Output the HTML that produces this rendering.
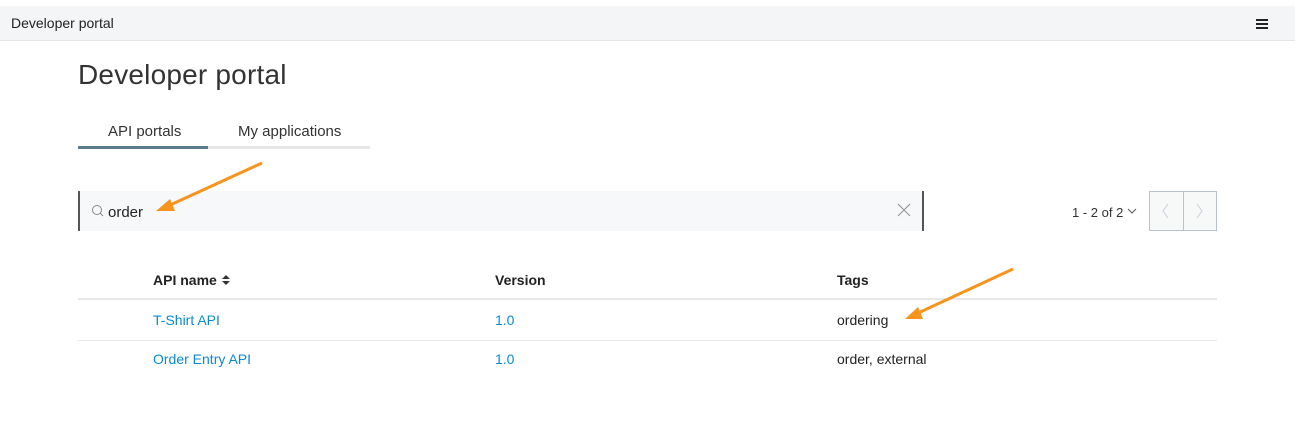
<!DOCTYPE html>
<html><head><style>
body{margin:0;width:1295px;height:443px;background:#fff;font-family:"Liberation Sans",sans-serif;color:#222;position:relative;overflow:hidden}
.a{position:absolute}
</style></head><body>
<div class="a" style="left:0;top:6px;width:1295px;height:34px;background:#f4f5f6;border-bottom:1px solid #e2e4e6"></div>
<div class="a" style="left:11px;top:15px;font-size:14px;color:#222">Developer portal</div>
<div class="a" style="left:1256px;top:19px;width:12px;height:2px;background:#222;box-shadow:0 4px 0 #222,0 8px 0 #222"></div>
<div class="a" style="left:78px;top:59px;font-size:28px;font-weight:300;color:#333;letter-spacing:0.2px">Developer portal</div>
<div class="a" style="left:108px;top:123px;font-size:15px;color:#333">API portals</div>
<div class="a" style="left:238px;top:123px;font-size:15px;color:#333">My applications</div>
<div class="a" style="left:78px;top:146px;width:292px;height:3px;background:#e6e7e8"></div>
<div class="a" style="left:78px;top:146px;width:130px;height:3px;background:#5b7d93"></div>
<div class="a" style="left:78px;top:191px;width:846px;height:40px;background:#f7f8f9;border-left:2px solid #555;border-right:2px solid #555;box-sizing:border-box"></div>
<svg class="a" style="left:91px;top:204px" width="14" height="14"><circle cx="6" cy="6" r="4.5" fill="none" stroke="#888" stroke-width="1"/><line x1="9" y1="9" x2="12" y2="12" stroke="#888"/></svg>
<div class="a" style="left:108px;top:204px;font-size:15px;color:#222">order</div>
<svg class="a" style="left:897px;top:203px" width="14" height="14"><path d="M1 1L13 13M13 1L1 13" stroke="#999" stroke-width="1.2"/></svg>
<div class="a" style="left:1072px;top:205px;font-size:13px;color:#333">1 - 2 of 2</div>
<svg class="a" style="left:1127px;top:208px" width="10" height="6"><path d="M1 1L5 5L9 1" fill="none" stroke="#555"/></svg>
<div class="a" style="left:1149px;top:191px;width:68px;height:40px;background:#f7f8f8;border:1px solid #b8c2c8;box-sizing:border-box"></div>
<div class="a" style="left:1183px;top:191px;width:1px;height:40px;background:#b8c2c8"></div>
<svg class="a" style="left:1160px;top:203px" width="12" height="16"><path d="M8 1L3 8L8 15" fill="none" stroke="#ccd" /></svg>
<svg class="a" style="left:1194px;top:203px" width="12" height="16"><path d="M3 1L8 8L3 15" fill="none" stroke="#ccd"/></svg>
<div class="a" style="left:153px;top:272px;font-size:14px;font-weight:bold;color:#222">API name</div>
<svg class="a" style="left:221px;top:274px" width="10" height="12"><path d="M1 5L5 1L9 5Z M1 7L5 11L9 7Z" fill="#333"/></svg>
<div class="a" style="left:495px;top:272px;font-size:14px;font-weight:bold;color:#222">Version</div>
<div class="a" style="left:837px;top:272px;font-size:14px;font-weight:bold;color:#222">Tags</div>
<div class="a" style="left:78px;top:298px;width:1139px;height:2px;background:#e6e7e8"></div>
<div class="a" style="left:78px;top:340px;width:1139px;height:1px;background:#e6e7e8"></div>
<div class="a" style="left:153px;top:312px;font-size:14px;color:#0a8ad6">T-Shirt API</div>
<div class="a" style="left:495px;top:312px;font-size:14px;color:#0a8ad6">1.0</div>
<div class="a" style="left:837px;top:312px;font-size:14px;color:#222">ordering</div>
<div class="a" style="left:153px;top:351px;font-size:14px;color:#0a8ad6">Order Entry API</div>
<div class="a" style="left:495px;top:351px;font-size:14px;color:#0a8ad6">1.0</div>
<div class="a" style="left:837px;top:351px;font-size:14px;color:#222">order, external</div>
<svg class="a" style="left:0;top:0" width="1295" height="443">
<line x1="262" y1="163" x2="168" y2="206" stroke="#f7941d" stroke-width="3"/>
<polygon points="156,211 170,199 175,211" fill="#f7941d"/>
<line x1="1013" y1="269" x2="916" y2="314" stroke="#f7941d" stroke-width="3"/>
<polygon points="905,319 918,307 923,319" fill="#f7941d"/>
</svg>
</body></html>
